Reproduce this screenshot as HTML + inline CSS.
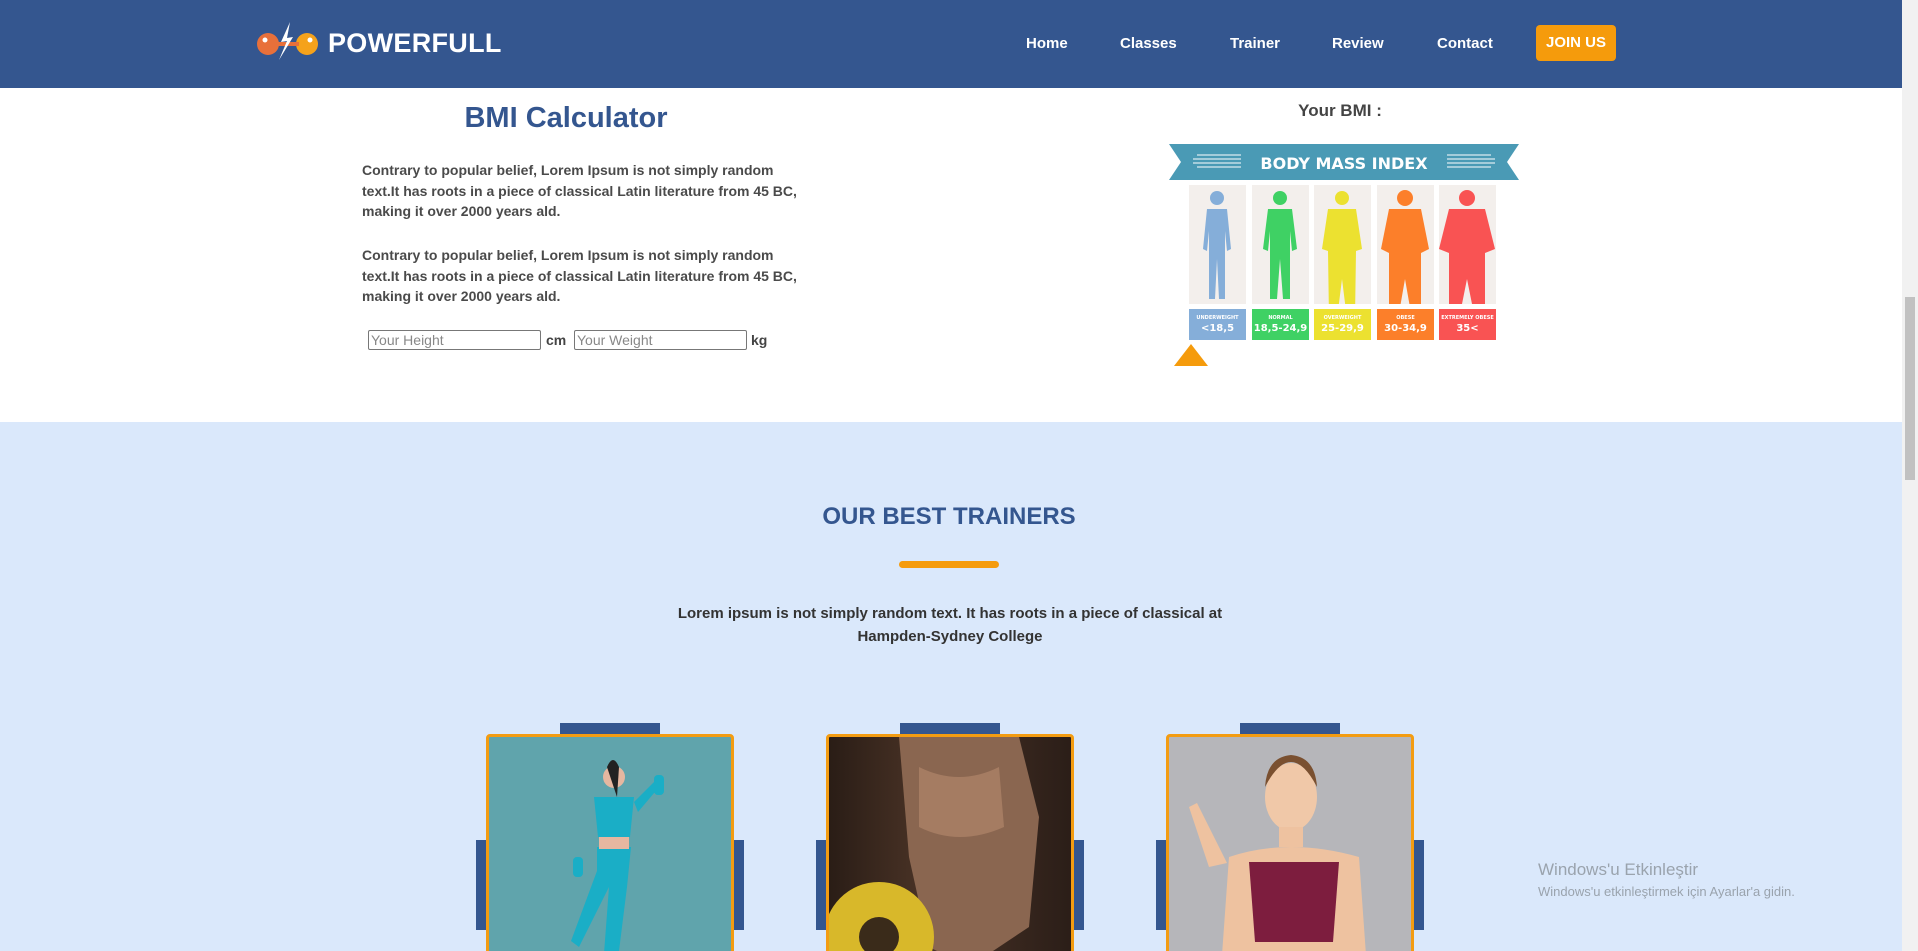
<!DOCTYPE html>
<html style="width:1918px;height:951px;overflow:hidden"><head><meta charset="utf-8"><style>
*{margin:0;padding:0;box-sizing:border-box}
body{width:1918px;height:951px;overflow:hidden;position:relative;background:#fff;font-family:"Liberation Sans",Arial,sans-serif}
#w{position:absolute;left:0;top:0;width:1918px;height:951px;overflow:hidden}
.a{position:absolute}
.nav{left:0;top:0;width:1902px;height:88px;background:#34568f}
.nl{top:35px;color:#fff;font-weight:bold;font-size:15px}
.p{left:362px;width:445px;font-size:14px;font-weight:bold;color:#4a4a4a;line-height:20.5px}
.inp{height:20px;border:1px solid #777;border-radius:2px;font-size:14px;color:#888;padding-left:2px;line-height:18px;background:#fff}
.col{width:57px;height:119px;background:#f3efec;top:185px}
.lab{width:57px;height:31px;top:309px;color:#fff;text-align:center;font-family:"DejaVu Sans",sans-serif;font-weight:bold}
.lab b{display:block;font-size:5px;margin-top:6px}
.lab i{display:block;font-style:normal;font-size:10px;margin-top:2px}
.tab{width:100px;height:12px;top:723px;background:#34568f}
.side{width:268px;height:90px;top:840px;background:#34568f}
.card{width:248px;height:240px;top:734px;border:3px solid #f39c12;border-radius:4px;overflow:hidden}
</style></head><body><div id="w">
<div class="a nav"></div>
<svg class="a" style="left:255px;top:20px" width="76" height="42" viewBox="0 0 76 42">
<circle cx="13" cy="24" r="11" fill="#e8703a"/><circle cx="52" cy="24" r="11" fill="#f5a21b"/>
<rect x="22" y="22" width="22" height="4" fill="#e8703a"/>
<circle cx="10" cy="20" r="2.5" fill="#fff"/><circle cx="55" cy="20" r="2.5" fill="#fff"/>
<path d="M35 2 L26 22 L32 21 L24 40 L38 17 L32 18 Z" fill="#fff"/></svg>
<div class="a" style="left:328px;top:28px;color:#fff;font-weight:900;font-size:27px;letter-spacing:0.3px">POWERFULL</div>
<div class="a nl" style="left:1026px">Home</div>
<div class="a nl" style="left:1120px">Classes</div>
<div class="a nl" style="left:1230px">Trainer</div>
<div class="a nl" style="left:1332px">Review</div>
<div class="a nl" style="left:1437px">Contact</div>
<div class="a" style="left:1536px;top:25px;width:80px;height:36px;background:#f59b0c;border-radius:4px;color:#fff;font-weight:bold;font-size:15px;text-align:center;line-height:36px">JOIN US</div>
<div class="a" style="left:1902px;top:0;width:16px;height:951px;background:#f1f1f1"></div>
<div class="a" style="left:1905px;top:297px;width:10px;height:183px;background:#c1c1c1"></div>

<div class="a" style="left:366px;top:102px;width:400px;text-align:center;color:#34568f;font-weight:bold;font-size:29px">BMI Calculator</div>
<div class="a p" style="top:160px">Contrary to popular belief, Lorem Ipsum is not simply random<br>text.It has roots in a piece of classical Latin literature from 45 BC,<br>making it over 2000 years ald.</div>
<div class="a p" style="top:245px">Contrary to popular belief, Lorem Ipsum is not simply random<br>text.It has roots in a piece of classical Latin literature from 45 BC,<br>making it over 2000 years ald.</div>
<div class="a inp" style="left:368px;top:330px;width:173px">Your Height</div>
<div class="a" style="left:546px;top:332px;font-size:14px;font-weight:bold;color:#444">cm</div>
<div class="a inp" style="left:574px;top:330px;width:173px">Your Weight</div>
<div class="a" style="left:751px;top:332px;font-size:14px;font-weight:bold;color:#444">kg</div>

<div class="a" style="left:1240px;top:101px;width:200px;text-align:center;font-weight:bold;font-size:17px;color:#444">Your BMI :</div>
<svg class="a" style="left:1169px;top:144px" width="350" height="37"><polygon points="0,0 350,0 338,18 350,36 0,36 12,18" fill="#4a9ab5"/>
<g stroke="#fff" stroke-width="1"><line x1="28" y1="11" x2="72" y2="11"/><line x1="24" y1="15" x2="72" y2="15"/><line x1="24" y1="19" x2="72" y2="19"/><line x1="28" y1="23" x2="72" y2="23"/><line x1="278" y1="11" x2="322" y2="11"/><line x1="278" y1="15" x2="326" y2="15"/><line x1="278" y1="19" x2="326" y2="19"/><line x1="278" y1="23" x2="322" y2="23"/></g>
<text x="175" y="25" text-anchor="middle" fill="#fff" font-family="DejaVu Sans" font-weight="bold" font-size="16">BODY MASS INDEX</text></svg>
<div class="a col" style="left:1189px"></div><div class="a col" style="left:1252px"></div><div class="a col" style="left:1314px"></div><div class="a col" style="left:1377px"></div><div class="a col" style="left:1439px"></div>
<svg class="a" style="left:1189px;top:185px" width="310" height="119">
<g fill="#85aed9"><circle cx="28" cy="13" r="7"/><path d="M18 24h20l4 40-4 2-2-20 0 68h-6l-2-40-2 40h-6l0-68-2 20-4-2z"/></g>
<g fill="#3fd164" transform="translate(63,0)"><circle cx="28" cy="13" r="7"/><path d="M16 24h24l5 40-5 2-2-20 0 68h-7l-3-40-3 40h-7l0-68-2 20-5-2z"/></g>
<g fill="#ece130" transform="translate(125,0)"><circle cx="28" cy="13" r="7"/><path d="M14 24h28l6 40-6 2-1 68h-8l-5-40-5 40h-8l-1-68-6-2z"/></g>
<g fill="#fc7f2a" transform="translate(188,0)"><circle cx="28" cy="13" r="8"/><path d="M12 24h32l8 40-8 4 0 66h-9l-7-40-7 40h-9l0-66-8-4z"/></g>
<g fill="#f95353" transform="translate(250,0)"><circle cx="28" cy="13" r="8"/><path d="M10 24h36l10 40-10 4 0 66h-10l-8-40-8 40h-10l0-66-10-4z"/></g></svg>
<div class="a lab" style="left:1189px;background:#85aed9"><b>UNDERWEIGHT</b><i>&lt;18,5</i></div>
<div class="a lab" style="left:1252px;background:#3fd164"><b>NORMAL</b><i>18,5-24,9</i></div>
<div class="a lab" style="left:1314px;background:#ece130"><b>OVERWEIGHT</b><i>25-29,9</i></div>
<div class="a lab" style="left:1377px;background:#fc7f2a"><b>OBESE</b><i>30-34,9</i></div>
<div class="a lab" style="left:1439px;background:#f95353"><b>EXTREMELY OBESE</b><i>35&lt;</i></div>
<svg class="a" style="left:1174px;top:344px" width="34" height="22"><polygon points="17,0 34,22 0,22" fill="#f59b0c"/></svg>

<div class="a" style="left:0;top:422px;width:1902px;height:529px;background:#dae8fb"></div>
<div class="a" style="left:749px;top:503px;width:400px;text-align:center;color:#34568f;font-weight:bold;font-size:24px">OUR BEST TRAINERS</div>
<div class="a" style="left:899px;top:561px;width:100px;height:7px;background:#f59b0c;border-radius:4px"></div>
<div class="a" style="left:600px;top:602px;width:700px;text-align:center;color:#333;font-weight:bold;font-size:15px;line-height:23px">Lorem ipsum is not simply random text. It has roots in a piece of classical at<br>Hampden-Sydney College</div>

<div class="a tab" style="left:560px"></div><div class="a side" style="left:476px"></div>
<div class="a card" style="left:486px;background:#60a4ac">
<svg width="248" height="240"><g fill="#1aaec6"><circle cx="125" cy="40" r="11" fill="#e6b7a0"/><path d="M118 30 q6-14 12 0 l-2 30z" fill="#222"/><path d="M105 60h40l-4 40h-32z"/><path d="M108 110h34l-4 40 -10 80h-14l6-80-30 60-8-6 26-70z"/><path d="M145 65l20-20 6 4-22 26z"/><rect x="165" y="38" width="10" height="20" rx="4"/><rect x="84" y="120" width="10" height="20" rx="4"/></g><rect x="110" y="100" width="30" height="12" fill="#e6b7a0"/></svg></div>
<div class="a tab" style="left:900px"></div><div class="a side" style="left:816px"></div>
<div class="a card" style="left:826px;background:linear-gradient(90deg,#2a1d16,#4a3326 40%,#2b1e18)">
<svg width="248" height="240"><path d="M70 0h120l20 80-10 110-60 40-40-20-20-90z" fill="#8a6650"/><path d="M90 30q40 20 80 0l5 60q-45 20-85 0z" fill="#a57c62"/><circle cx="50" cy="200" r="55" fill="#d8b82a"/><circle cx="50" cy="200" r="20" fill="#3a2b1a"/></svg></div>
<div class="a tab" style="left:1240px"></div><div class="a side" style="left:1156px"></div>
<div class="a card" style="left:1166px;background:#b6b6ba">
<svg width="248" height="240"><ellipse cx="122" cy="60" rx="26" ry="34" fill="#f0c8a8"/><path d="M96 50q26-50 52 0q-2-30-26-32q-24 2-26 32z" fill="#7a5030"/><rect x="110" y="90" width="24" height="20" fill="#eec2a0"/><path d="M60 120q60-20 130 0l10 140h-150z" fill="#eec2a0"/><path d="M80 125h90l-6 80h-78z" fill="#7d1d3e"/><path d="M40 130l-20-60 8-4 30 60z" fill="#eec2a0"/></svg></div>

<div class="a" style="left:1538px;top:860px;color:#9aa3ad;font-size:17px">Windows'u Etkinleştir</div>
<div class="a" style="left:1538px;top:884px;color:#9aa3ad;font-size:13px">Windows'u etkinleştirmek için Ayarlar'a gidin.</div>
</div></body></html>
